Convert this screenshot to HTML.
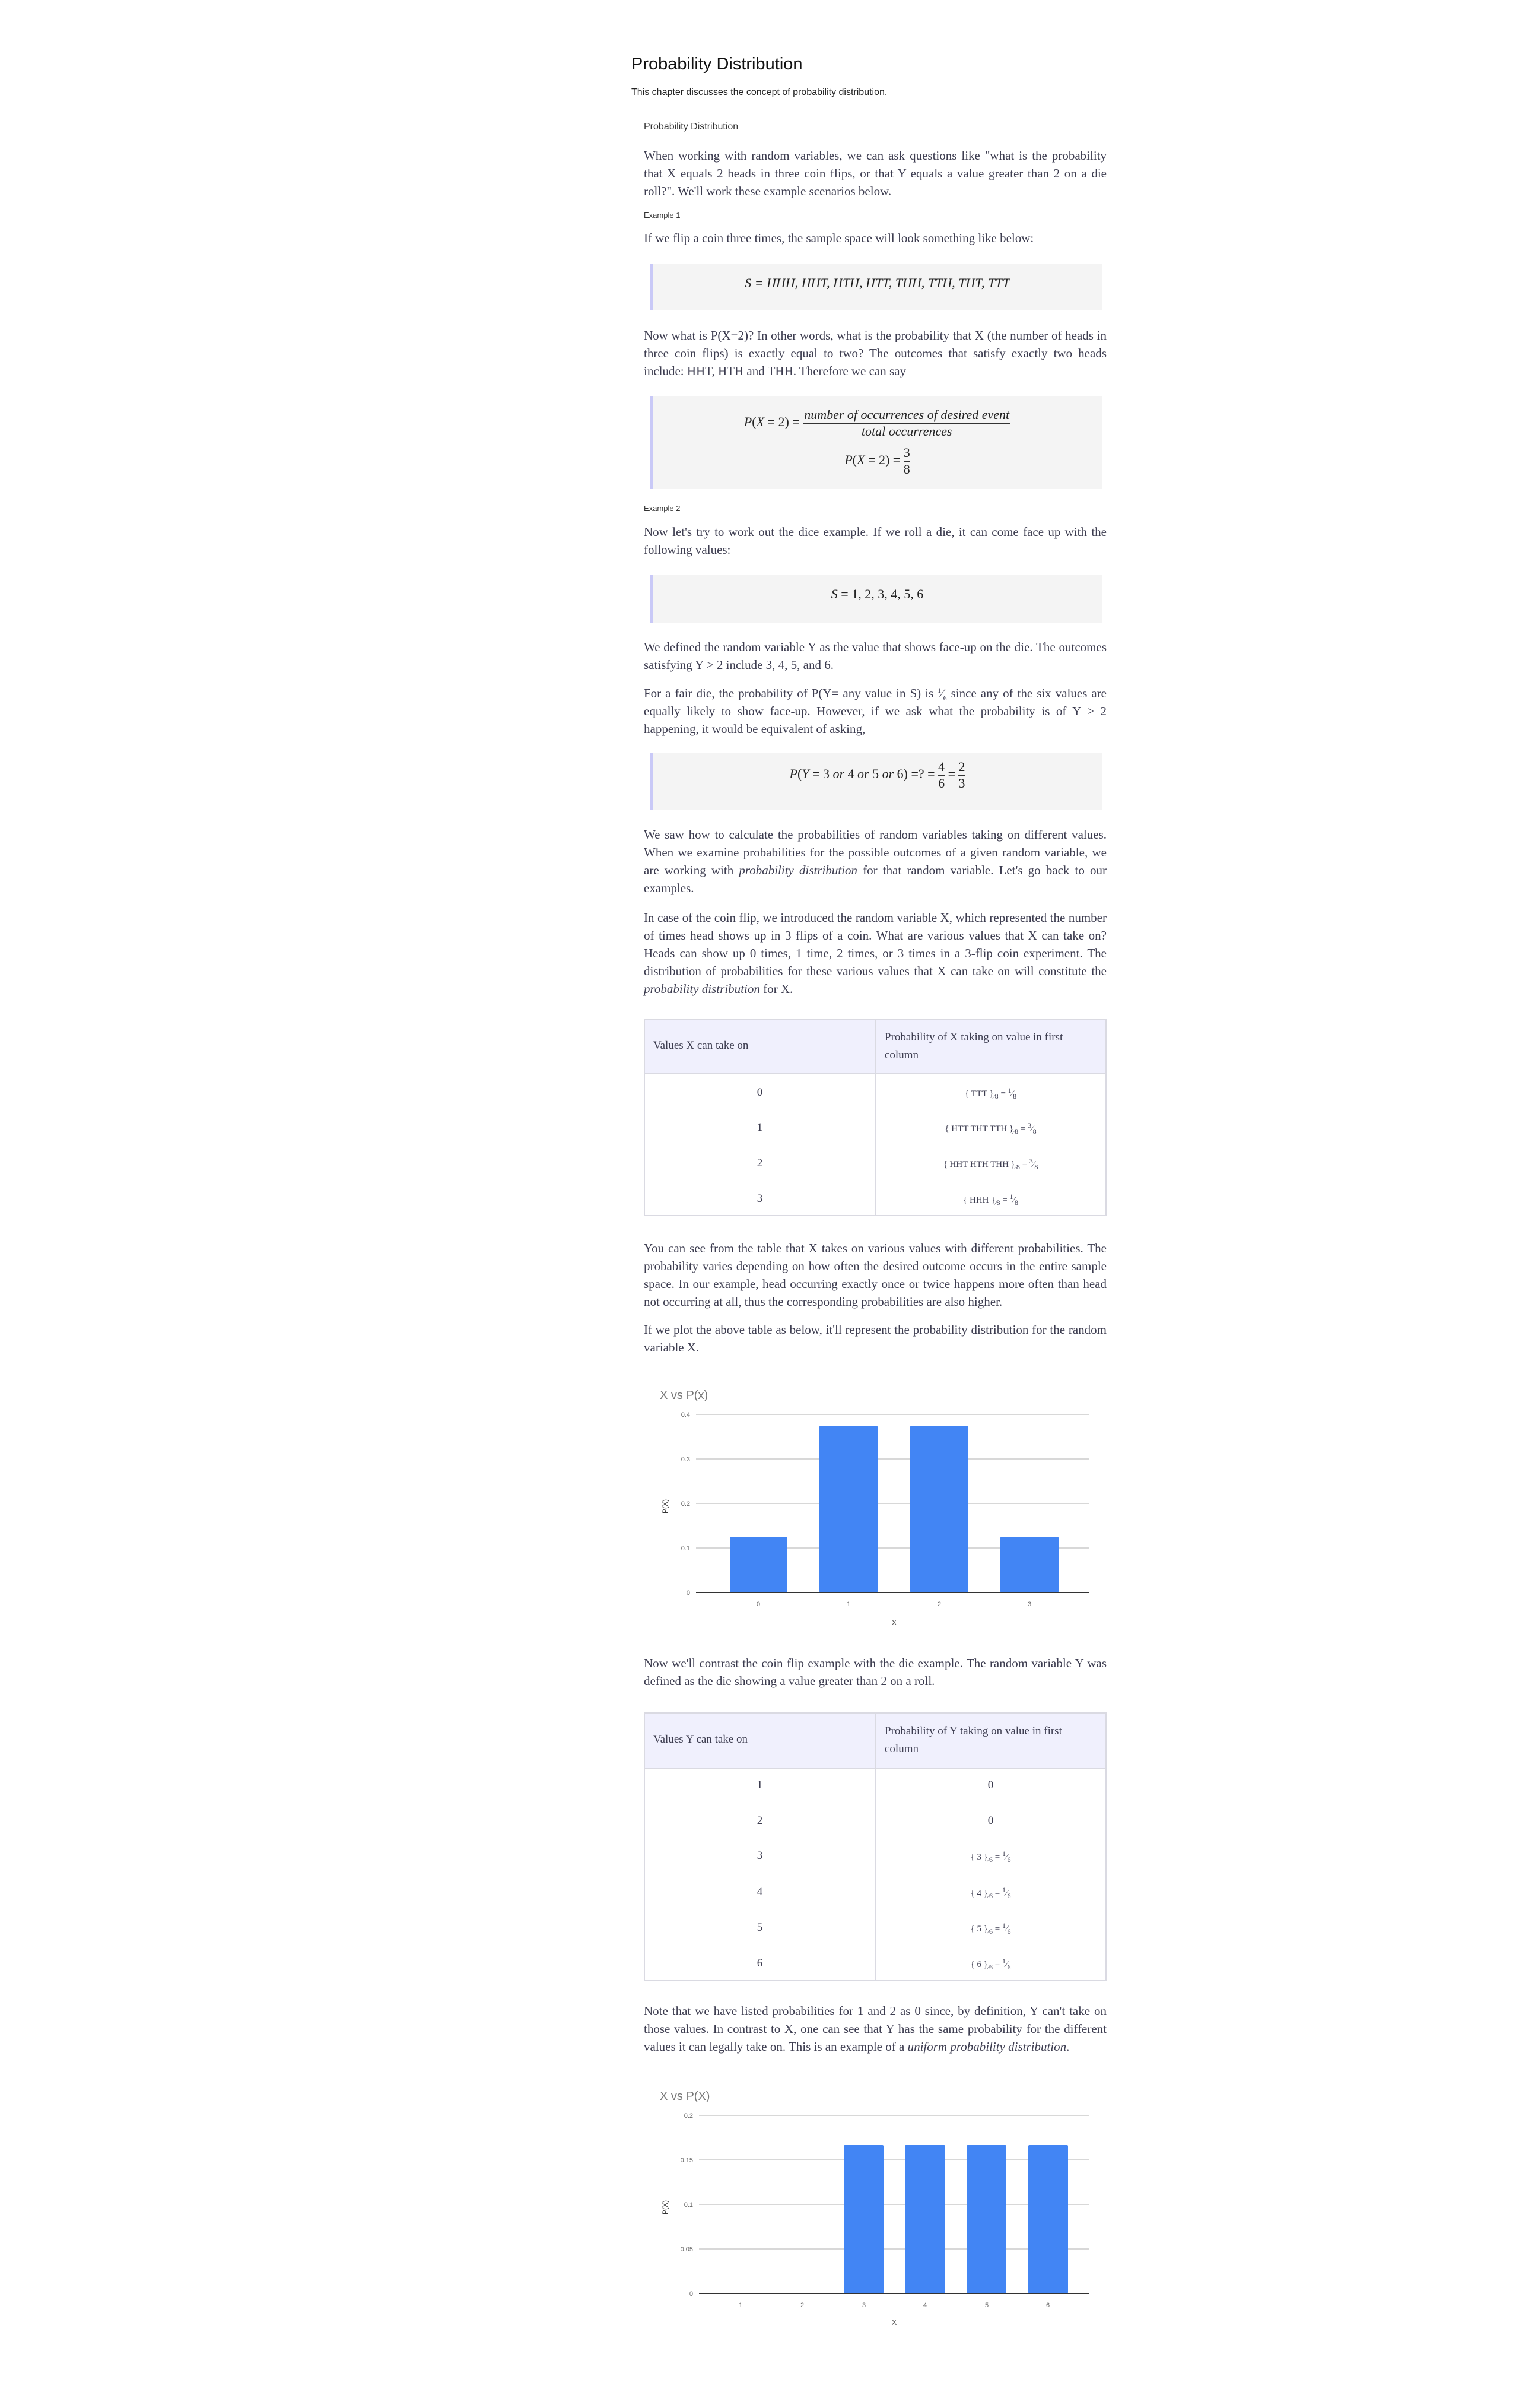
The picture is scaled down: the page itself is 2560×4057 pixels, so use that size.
<!DOCTYPE html>
<html><head><meta charset="utf-8">
<style>
body{margin:0;background:#fff;width:2560px;height:4057px;position:relative;overflow:hidden;}
.a{position:absolute;}
.t{font-family:"Liberation Sans",sans-serif;color:#111;}
.p{position:absolute;left:1085px;width:780px;font-family:"Liberation Serif",serif;font-size:21px;line-height:30px;color:#3d3d50;text-align:justify;margin:0;}
.s{position:absolute;left:1085px;font-family:"Liberation Sans",sans-serif;font-size:13px;color:#333;}
.box{position:absolute;left:1095px;width:762px;background:#f4f4f4;border-left:5px solid #c9c9f7;box-sizing:border-box;font-family:"Liberation Serif",serif;font-size:22px;color:#222;text-align:center;}
.m{font-style:italic;}
.tb{position:absolute;left:1085px;width:780px;border:2px solid #dadae2;box-sizing:border-box;font-family:"Liberation Serif",serif;color:#3d3d50;}
.hd{position:absolute;left:0;right:0;top:0;background:#f0f0fd;border-bottom:2px solid #dadae2;}
.vl{position:absolute;left:387px;top:0;bottom:0;width:2px;background:#dadae2;}
.c1{position:absolute;left:0;width:387px;text-align:center;font-size:19px;}
.c2{position:absolute;left:389px;width:387px;text-align:center;font-size:15px;}
sup,sub{font-size:12px;}
</style></head><body>

<div class="a t" style="left:1064px;top:92px;font-size:29px;">Probability Distribution</div>
<div class="a t" style="left:1064px;top:147px;font-size:16px;color:#222;">This chapter discusses the concept of probability distribution.</div>
<div class="a t" style="left:1085px;top:205px;font-size:16px;color:#333;">Probability Distribution</div>

<p class="p" style="top:247px;">When working with random variables, we can ask questions like "what is the probability that X equals 2 heads in three coin flips, or that Y equals a value greater than 2 on a die roll?". We'll work these example scenarios below.</p>
<div class="s" style="top:355px;">Example 1</div>
<p class="p" style="top:386px;">If we flip a coin three times, the sample space will look something like below:</p>
<div class="box m" style="top:445px;height:78px;line-height:64px;">S = HHH, HHT, HTH, HTT, THH, TTH, THT, TTT</div>
<p class="p" style="top:550px;">Now what is P(X=2)? In other words, what is the probability that X (the number of heads in three coin flips) is exactly equal to two? The outcomes that satisfy exactly two heads include: HHT, HTH and THH. Therefore we can say</p>
<div class="box" style="top:668px;height:156px;">
 <div class="a" style="left:0;right:0;top:18px;"><span class="m">P</span>(<span class="m">X</span> = 2) = <span style="display:inline-block;vertical-align:middle;text-align:center;"><span class="m" style="display:block;border-bottom:2px solid #333;padding:0 2px;">number of occurrences of desired event</span><span class="m" style="display:block;">total occurrences</span></span></div>
 <div class="a" style="left:0;right:0;top:82px;"><span class="m">P</span>(<span class="m">X</span> = 2) = <span style="display:inline-block;vertical-align:middle;text-align:center;"><span style="display:block;border-bottom:2px solid #333;">3</span><span style="display:block;">8</span></span></div>
</div>
<div class="s" style="top:849px;">Example 2</div>
<p class="p" style="top:881px;">Now let's try to work out the dice example. If we roll a die, it can come face up with the following values:</p>
<div class="box" style="top:969px;height:80px;line-height:64px;"><span class="m">S</span> = 1, 2, 3, 4, 5, 6</div>
<p class="p" style="top:1075px;">We defined the random variable Y as the value that shows face-up on the die. The outcomes satisfying Y &gt; 2 include 3, 4, 5, and 6.</p>
<p class="p" style="top:1153px;">For a fair die, the probability of P(Y= any value in S) is <sup style="line-height:0">1</sup>&frasl;<sub style="line-height:0">6</sub> since any of the six values are equally likely to show face-up. However, if we ask what the probability is of Y &gt; 2 happening, it would be equivalent of asking,</p>
<div class="box" style="top:1269px;height:96px;">
 <div class="a" style="left:0;right:0;top:10px;"><span class="m">P</span>(<span class="m">Y</span> = 3 <span class="m">or</span> 4 <span class="m">or</span> 5 <span class="m">or</span> 6) =? = <span style="display:inline-block;vertical-align:middle;text-align:center;"><span style="display:block;border-bottom:2px solid #333;">4</span><span style="display:block;">6</span></span> = <span style="display:inline-block;vertical-align:middle;text-align:center;"><span style="display:block;border-bottom:2px solid #333;">2</span><span style="display:block;">3</span></span></div>
</div>
<p class="p" style="top:1391px;">We saw how to calculate the probabilities of random variables taking on different values. When we examine probabilities for the possible outcomes of a given random variable, we are working with <i>probability distribution</i> for that random variable. Let's go back to our examples.</p>
<p class="p" style="top:1531px;">In case of the coin flip, we introduced the random variable X, which represented the number of times head shows up in 3 flips of a coin. What are various values that X can take on? Heads can show up 0 times, 1 time, 2 times, or 3 times in a 3-flip coin experiment. The distribution of probabilities for these various values that X can take on will constitute the <i>probability distribution</i> for X.</p>

<div class="tb" style="top:1717px;height:332px;">
 <div class="hd" style="height:89px;"></div>
 <div class="vl"></div>
 <div class="a" style="left:14px;top:32px;font-size:19px;">Values X can take on</div>
 <div class="a" style="left:404px;top:14px;font-size:19px;line-height:30px;width:350px;">Probability of X taking on value in first column</div>
 <div class="c1" style="top:111px;">0</div><div class="c2" style="top:111px;">{ TTT }<sub>&frasl;8</sub> = <sup>1</sup>&frasl;<sub>8</sub></div>
 <div class="c1" style="top:170px;">1</div><div class="c2" style="top:170px;">{ HTT THT TTH }<sub>&frasl;8</sub> = <sup>3</sup>&frasl;<sub>8</sub></div>
 <div class="c1" style="top:230px;">2</div><div class="c2" style="top:230px;">{ HHT HTH THH }<sub>&frasl;8</sub> = <sup>3</sup>&frasl;<sub>8</sub></div>
 <div class="c1" style="top:290px;">3</div><div class="c2" style="top:290px;">{ HHH }<sub>&frasl;8</sub> = <sup>1</sup>&frasl;<sub>8</sub></div>
</div>

<p class="p" style="top:2088px;">You can see from the table that X takes on various values with different probabilities. The probability varies depending on how often the desired outcome occurs in the entire sample space. In our example, head occurring exactly once or twice happens more often than head not occurring at all, thus the corresponding probabilities are also higher.</p>
<p class="p" style="top:2225px;">If we plot the above table as below, it'll represent the probability distribution for the random variable X.</p>

<p class="p" style="top:2787px;">Now we'll contrast the coin flip example with the die example. The random variable Y was defined as the die showing a value greater than 2 on a roll.</p>

<div class="tb" style="top:2885px;height:453px;">
 <div class="hd" style="height:91px;"></div>
 <div class="vl"></div>
 <div class="a" style="left:14px;top:33px;font-size:19px;">Values Y can take on</div>
 <div class="a" style="left:404px;top:15px;font-size:19px;line-height:30px;width:350px;">Probability of Y taking on value in first column</div>
 <div class="c1" style="top:110px;">1</div><div class="c1" style="left:389px;top:110px;">0</div>
 <div class="c1" style="top:170px;">2</div><div class="c1" style="left:389px;top:170px;">0</div>
 <div class="c1" style="top:229px;">3</div><div class="c2" style="top:229px;">{ 3 }<sub>&frasl;6</sub> = <sup>1</sup>&frasl;<sub>6</sub></div>
 <div class="c1" style="top:290px;">4</div><div class="c2" style="top:290px;">{ 4 }<sub>&frasl;6</sub> = <sup>1</sup>&frasl;<sub>6</sub></div>
 <div class="c1" style="top:350px;">5</div><div class="c2" style="top:350px;">{ 5 }<sub>&frasl;6</sub> = <sup>1</sup>&frasl;<sub>6</sub></div>
 <div class="c1" style="top:410px;">6</div><div class="c2" style="top:410px;">{ 6 }<sub>&frasl;6</sub> = <sup>1</sup>&frasl;<sub>6</sub></div>
</div>

<p class="p" style="top:3373px;">Note that we have listed probabilities for 1 and 2 as 0 since, by definition, Y can't take on those values. In contrast to X, one can see that Y has the same probability for the different values it can legally take on. This is an example of a <i>uniform probability distribution</i>.</p>

<svg class="a" style="left:0;top:0;" width="2560" height="4057" xmlns="http://www.w3.org/2000/svg" font-family="Liberation Sans, sans-serif">
 <g>
  <text x="1112" y="2357" font-size="20" fill="#757575">X vs P(x)</text>
  <g stroke="#cccccc" stroke-width="1.5">
   <line x1="1173" y1="2383" x2="1836" y2="2383"/><line x1="1173" y1="2458" x2="1836" y2="2458"/>
   <line x1="1173" y1="2533" x2="1836" y2="2533"/><line x1="1173" y1="2608" x2="1836" y2="2608"/>
  </g>
  <g font-size="11" fill="#666" text-anchor="end">
   <text x="1163" y="2387">0.4</text><text x="1163" y="2462">0.3</text><text x="1163" y="2537">0.2</text><text x="1163" y="2612">0.1</text><text x="1163" y="2687">0</text>
  </g>
  <g fill="#4285f4">
   <rect x="1230" y="2589" width="97" height="94" rx="2"/>
   <rect x="1381" y="2402" width="98" height="281" rx="2"/>
   <rect x="1534" y="2402" width="98" height="281" rx="2"/>
   <rect x="1686" y="2589" width="98" height="94" rx="2"/>
  </g>
  <line x1="1173" y1="2683" x2="1836" y2="2683" stroke="#333" stroke-width="2"/>
  <g font-size="11" fill="#666" text-anchor="middle">
   <text x="1278" y="2706">0</text><text x="1430" y="2706">1</text><text x="1583" y="2706">2</text><text x="1735" y="2706">3</text>
  </g>
  <text x="1507" y="2738" font-size="13" fill="#555" text-anchor="middle">X</text>
  <text transform="translate(1125,2538) rotate(-90)" font-size="12" fill="#333" text-anchor="middle">P(X)</text>
 </g>
 <g>
  <text x="1112" y="3538" font-size="20" fill="#757575">X vs P(X)</text>
  <g stroke="#cccccc" stroke-width="1.5">
   <line x1="1178" y1="3564" x2="1836" y2="3564"/><line x1="1178" y1="3639" x2="1836" y2="3639"/>
   <line x1="1178" y1="3714" x2="1836" y2="3714"/><line x1="1178" y1="3789" x2="1836" y2="3789"/>
  </g>
  <g font-size="11" fill="#666" text-anchor="end">
   <text x="1168" y="3568">0.2</text><text x="1168" y="3643">0.15</text><text x="1168" y="3718">0.1</text><text x="1168" y="3793">0.05</text><text x="1168" y="3868">0</text>
  </g>
  <g fill="#4285f4">
   <rect x="1422" y="3614" width="67" height="250" rx="2"/>
   <rect x="1525" y="3614" width="68" height="250" rx="2"/>
   <rect x="1629" y="3614" width="67" height="250" rx="2"/>
   <rect x="1733" y="3614" width="67" height="250" rx="2"/>
  </g>
  <line x1="1178" y1="3864" x2="1836" y2="3864" stroke="#333" stroke-width="2"/>
  <g font-size="11" fill="#666" text-anchor="middle">
   <text x="1248" y="3887">1</text><text x="1352" y="3887">2</text><text x="1456" y="3887">3</text><text x="1559" y="3887">4</text><text x="1663" y="3887">5</text><text x="1766" y="3887">6</text>
  </g>
  <text x="1507" y="3917" font-size="13" fill="#555" text-anchor="middle">X</text>
  <text transform="translate(1125,3719) rotate(-90)" font-size="12" fill="#333" text-anchor="middle">P(X)</text>
 </g>
</svg>
</body></html>
